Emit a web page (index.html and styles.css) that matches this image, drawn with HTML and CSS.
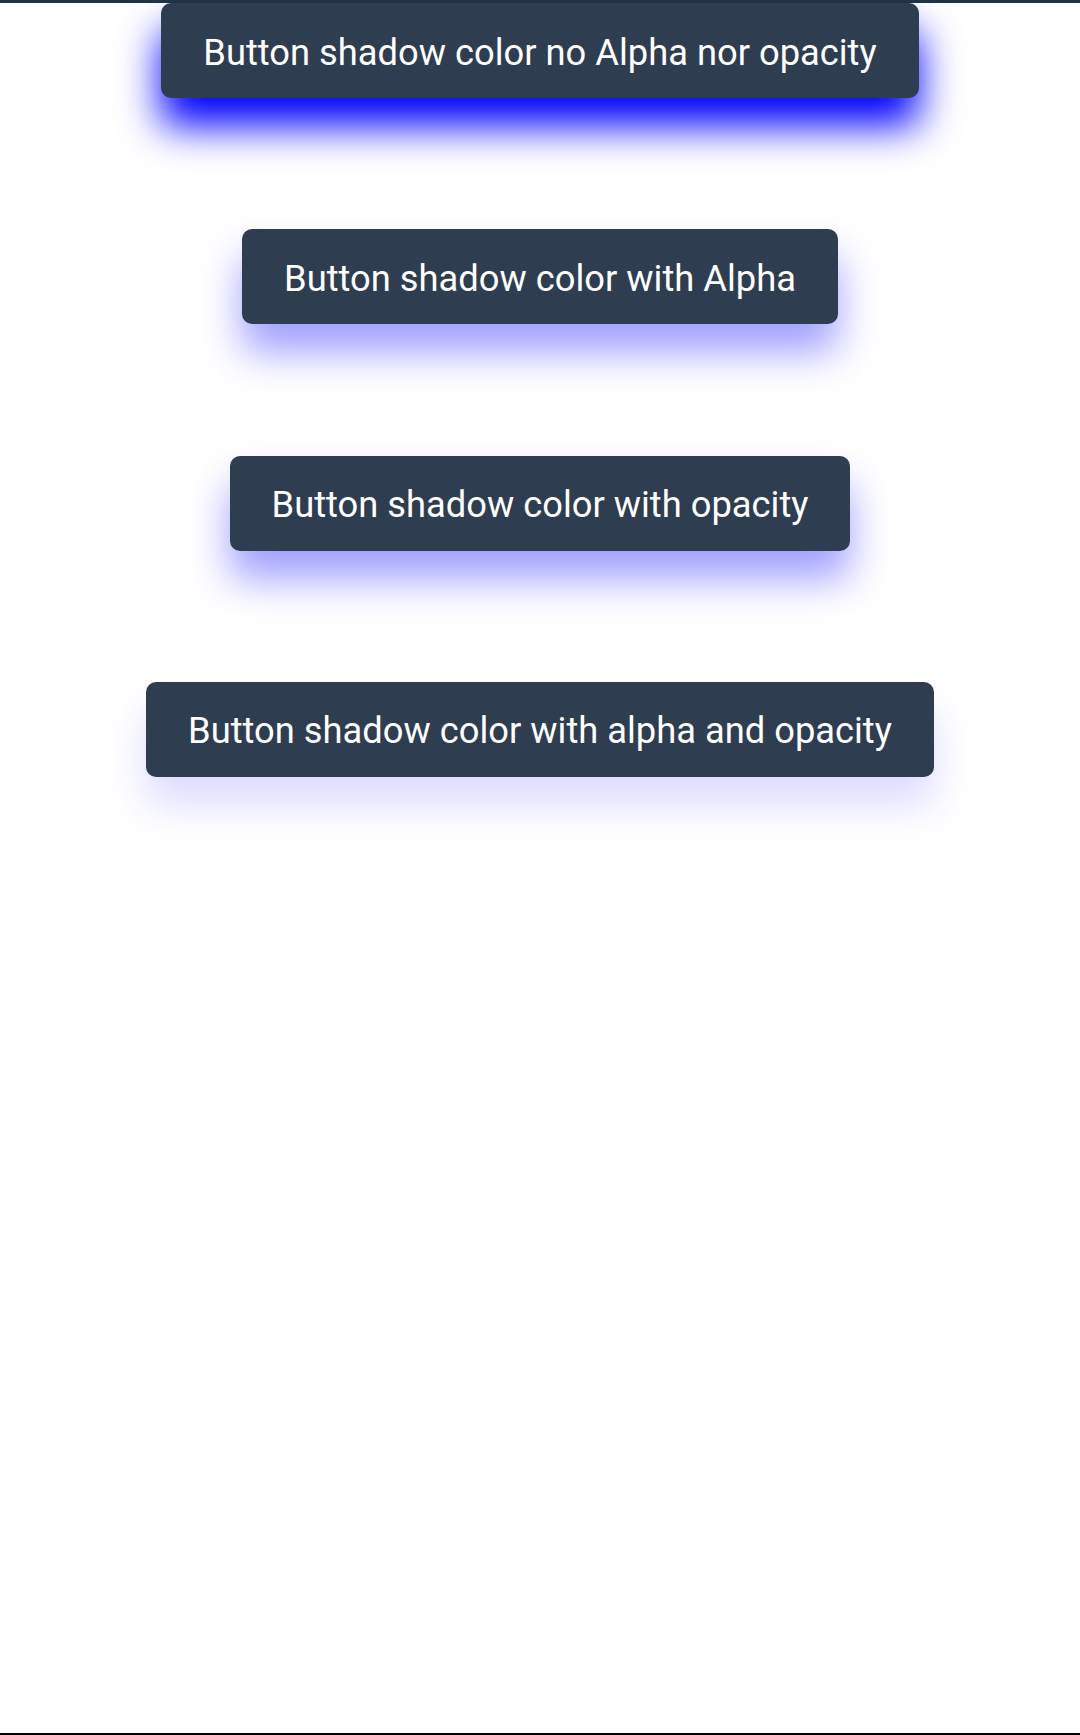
FILE: index.html
```html
<!DOCTYPE html>
<html>
<head>
<meta charset="utf-8">
<link rel="stylesheet" href="styles.css">
</head>
<body>
<div class="page">
  <div class="list">
    <button class="btn shadow-solid">Button shadow color no Alpha nor opacity</button>
    <button class="btn shadow-alpha">Button shadow color with Alpha</button>
    <button class="btn shadow-opacity">Button shadow color with opacity</button>
    <button class="btn shadow-both">Button shadow color with alpha and opacity</button>
  </div>
</div>
</body>
</html>
```
FILE: styles.css
```css
html, body {
  margin: 0;
  padding: 0;
  background: #ffffff;
}
.page {
  box-sizing: border-box;
  height: 1735px;
  border-top: 3px solid #1e3249;
  border-bottom: 2px solid #000000;
  overflow: hidden;
}
.list {
  display: flex;
  flex-direction: column;
  align-items: center;
  gap: 131.33px;
}
.btn {
  box-sizing: border-box;
  display: flex;
  align-items: center;
  justify-content: center;
  height: 95px;
  padding: 3px 42px 0;
  border: none;
  border-radius: 10px;
  background: #2e3d50;
  color: #ffffff;
  font-family: Roboto, "Liberation Sans", sans-serif;
  font-size: 36.3px;
  font-weight: 400;
  white-space: nowrap;
}
.shadow-solid {
  box-shadow: 0 28px 40px #0000ff;
}
.shadow-alpha {
  box-shadow: 0 28px 40px rgba(0, 0, 255, 0.38);
}
.shadow-opacity {
  box-shadow: 0 28px 40px rgba(0, 0, 255, 0.38);
}
.shadow-both {
  box-shadow: 0 28px 40px rgba(0, 0, 255, 0.14);
}
```
